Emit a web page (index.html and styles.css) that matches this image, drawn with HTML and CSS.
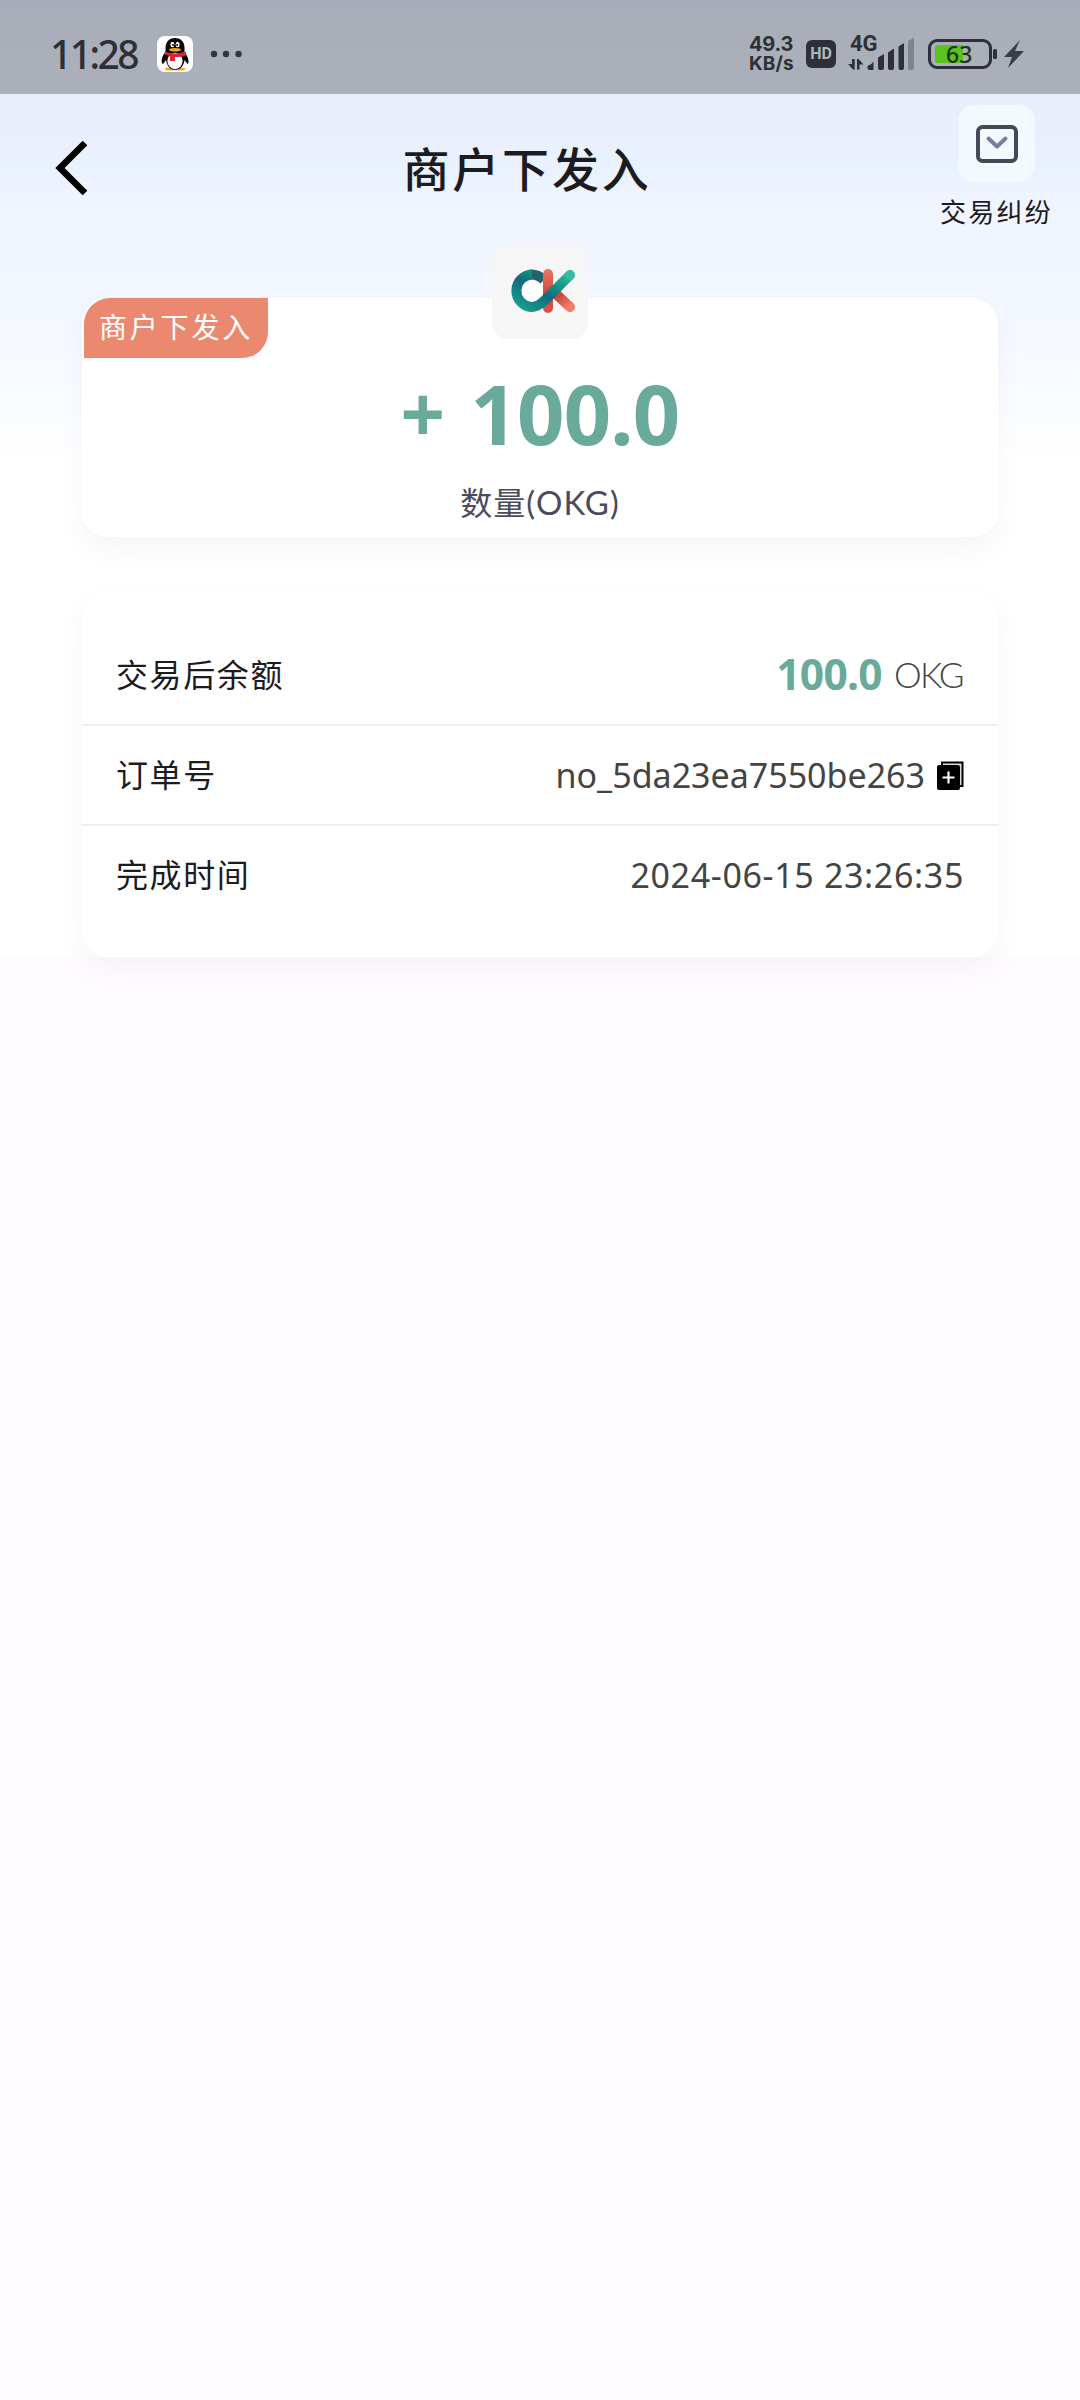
FILE: index.html
```html
<!DOCTYPE html>
<html lang="zh-CN">
<head>
<meta charset="utf-8">
<title>商户下发入</title>
<link rel="stylesheet" href="styles.css">
</head>
<body>
<div class="page">
  <div class="status">
    <span class="clock">11:28</span>
    <svg class="qq" viewBox="0 0 36 36">
      <rect width="36" height="36" rx="8" fill="#fff"/>
      <ellipse cx="12.500" cy="33" rx="4.500" ry="1.500" fill="#f4ab20"/><ellipse cx="23.500" cy="33" rx="4.500" ry="1.500" fill="#f4ab20"/>
      <path d="M8.500 16C4 21 4 27 6 28l3-4c1 6 4 10 9 10s9-4 9.500-10l3 4c2-1 1-7-3-12V12C27.500 5 23 2 18 2S8.500 5 8.500 12Z" fill="#050505"/>
      <ellipse cx="18" cy="25" rx="7.600" ry="8.200" fill="#fff"/>
      <path d="M7.500 15.500q10 4 21 0l.500 4q-5 2-11 1.500v4h-5v-5l-5-1.500Z" fill="#db2430"/>
      <ellipse cx="15.400" cy="8.500" rx="2" ry="2.700" fill="#fff"/><ellipse cx="20.600" cy="8.500" rx="2" ry="2.700" fill="#fff"/>
      <circle cx="16" cy="9" r="1"/><circle cx="20.200" cy="9" r="1"/>
      <ellipse cx="18" cy="13.700" rx="6" ry="1.800" fill="#f4ab20"/>
    </svg>
    <svg class="dots" viewBox="0 0 32 8" fill="#32363d"><circle cx="4" cy="4" r="3.200"/><circle cx="16" cy="4" r="3.200"/><circle cx="28.500" cy="4" r="3.200"/></svg>
    <span class="speed"><span class="rate">49.3</span><span class="unit">KB/s</span></span>
    <span class="hd">HD</span>
    <span class="signal">
      <span class="net">4G</span>
      <svg viewBox="0 0 68 34" fill="#2d3036">
        <path d="M4 22h2.700v10.500H5L0 27h4ZM9 32.500V22h1.500l5 5.500h-4v5Z"/>
        <path d="M19.500 29q4-1 6-4.500v8.500h-4q-2 0-2-2ZM30 20.500l6-3.500v14q0 2-2 2h-2q-2 0-2-2ZM40 15.500l6-4v19.500q0 2-2 2h-2q-2 0-2-2ZM50.500 9.500l5.500-3.500v25q0 2-2 2h-1.500q-2 0-2-2Z"/>
        <path d="M60 4l6-3.500v30.500q0 2-2 2h-2q-2 0-2-2Z" fill="#7f858f"/>
      </svg>
    </span>
    <span class="battery">
      <svg viewBox="0 0 96 32">
        <rect x="1.500" y="2.500" width="61" height="27" rx="7.500" fill="none" stroke="#2d3036" stroke-width="3"/>
        <path d="M10 7h25v18H10q-3 0-3-3V10q0-3 3-3Z" fill="#59c51c"/>
        <rect x="65" y="11" width="4" height="10" rx="1.500" fill="#2d3036"/>
        <path d="M92 2 76 19h8L80 30 96 13H87Z" fill="#3a3e45"/>
      </svg>
      <span class="level">63</span>
    </span>
  </div>

  <header class="header">
    <svg class="back" viewBox="0 0 34 56"><path d="M30 3 5 28l25 25" fill="none" stroke="#000" stroke-width="6.600"/></svg>
    <h1 class="title">商户下发入</h1>
    <div class="dispute">
      <span class="tile">
        <svg viewBox="0 0 42 38" fill="none"><rect x="2" y="2" width="38" height="34" rx="4.500" stroke="#454955" stroke-width="4"/><path d="M12.500 13.500l8.500 8 8.500-8" stroke="#777da1" stroke-width="4" stroke-linecap="round" stroke-linejoin="round"/></svg>
      </span>
      <span class="caption">交易纠纷</span>
    </div>
  </header>

  <main class="content">
    <section class="card summary">
      <span class="tag">商户下发入</span>
      <span class="logo">
        <svg viewBox="0 0 66 46">
          <defs>
            <linearGradient id="ring" x1="0" y1="1" x2="1" y2="0"><stop offset="0" stop-color="#16a28d"/><stop offset=".45" stop-color="#126a7d"/><stop offset=".7" stop-color="#129284"/><stop offset="1" stop-color="#35bda0"/></linearGradient>
            <linearGradient id="stem" gradientUnits="userSpaceOnUse" x1="0" y1="0" x2="0" y2="46"><stop offset="0" stop-color="#f17b64"/><stop offset=".55" stop-color="#c74840"/><stop offset="1" stop-color="#e05447"/></linearGradient>
            <linearGradient id="leg" x1="0" y1="0" x2="1" y2="1"><stop offset="0" stop-color="#bc3f39"/><stop offset="1" stop-color="#f4806c"/></linearGradient>
          </defs>
          <circle cx="22" cy="23" r="11" fill="#fff"/>
          <path d="M46 26l14 13" stroke="url(#leg)" stroke-width="10" stroke-linecap="round"/>
          <path d="M34 12Q28 6 20 6.500" fill="none" stroke="#27606f" stroke-width="10"/>
          <path d="M38 6v34" stroke="url(#stem)" stroke-width="10" stroke-linecap="round"/>
          <path d="M22 6.500A16.300 16.300 0 0 0 21 39c6 0 10-3 14-7L60 7" fill="none" stroke="url(#ring)" stroke-width="10"/>
          <circle cx="60" cy="7" r="5" fill="#35bda0"/>
        </svg>
      </span>
      <strong class="amount"><span class="sign">+</span><span>100.0</span></strong>
      <span class="quantity">数量<span class="code">(OKG)</span></span>
    </section>

    <section class="card details">
      <div class="row"><span class="label">交易后余额</span><span class="value"><b class="balance">100.0</b><span class="currency">OKG</span></span></div>
      <div class="row"><span class="label">订单号</span><span class="value"><span class="order">no_5da23ea7550be263</span>
        <svg class="copy" viewBox="0 0 27 29"><path d="M5 1h21v24H22V5H5Z" fill="#ddd"/><path d="M5 4V1.500h20.500V25H23" fill="none" stroke="#000" stroke-width="2"/><rect y="4" width="23" height="25" rx="2"/><path d="M5.500 16.500h12M11.500 10.500v12" stroke="#fff" stroke-width="2.200"/></svg></span></div>
      <div class="row"><span class="label">完成时间</span><span class="value"><span class="time">2024-06-15 23:26:35</span></span></div>
    </section>
  </main>
</div>
</body>
</html>
```
FILE: styles.css
```css
* { box-sizing: border-box; }
body { margin: 0; min-height: 2400px; background: #fffbff; color: #1c1b1f; font-family: "Noto Sans", "Noto Sans CJK SC", sans-serif; }
svg { display: block; flex: none; }
.page { width: 1080px; height: 957px; background: linear-gradient(#e3e9f8 0, #e8eefb 100px, #eaf2fd 175px, #f0f4fe 200px, #f3f7ff 310px, #fff 460px); }

.status { height: 94px; padding: 14px 55px 0 50px; display: flex; align-items: center; background: rgba(0, 0, 0, .26); color: #2d3036; }
.clock { width: 107px; font-size: 39px; font-weight: 500; line-height: 48px; letter-spacing: -2.600px; }
.qq { width: 36px; height: 36px; }
.dots { width: 32px; height: 8px; margin-left: 17px; }
.speed { width: 57px; margin-left: 507px; display: flex; flex-direction: column; font-family: Inter, sans-serif; font-weight: 700; line-height: 20px; }
.rate { font-size: 20px; letter-spacing: -.2px; }
.unit { font-size: 19px; letter-spacing: .1px; }
.hd { width: 30px; height: 28px; border-radius: 6px; background: #2d3036; color: #b0b5bf; font: 700 16px/28px Roboto, sans-serif; text-align: center; }
.signal { position: relative; width: 68px; margin-left: 12px; }
.signal svg { width: 68px; height: 34px; }
.net { position: absolute; left: 2px; top: -5px; font: 700 22px/24px Roboto, sans-serif; }
.battery { position: relative; margin-left: 12px; }
.battery svg { width: 96px; height: 32px; }
.level { position: absolute; left: 18px; top: 1px; font-size: 23px; font-weight: 500; line-height: 30px; color: #1e3515; }

.header { height: 204px; display: grid; grid-template-columns: 200px 654px 1fr; }
.back { width: 34px; height: 56px; margin: 46px 0 0 55px; }
.title { margin: 42px 0 0; text-align: center; font: 500 47px/62px "Noto Sans CJK SC", sans-serif; letter-spacing: 2.800px; }
.dispute { display: flex; flex-direction: column; align-items: center; padding-top: 11px; margin-left: 59px; }
.tile { width: 77px; height: 77px; border-radius: 16px; background: #f4f8ff; display: grid; place-items: center; }
.tile svg { width: 42px; height: 38px; }
.caption { margin-top: 11px; font: 400 26px/36px "Noto Sans CJK SC", sans-serif; letter-spacing: 2.300px; white-space: nowrap; }

.content { padding: 0 82px; display: flex; flex-direction: column; gap: 53px; }
.card { background: #fff; border-radius: 26px; box-shadow: 0 12px 28px rgba(0, 0, 0, .045); }
.summary { position: relative; height: 239px; padding-top: 68px; display: flex; flex-direction: column; align-items: center; }
.tag { position: absolute; left: 2px; top: 0; width: 184px; height: 60px; border-radius: 26px 0 26px 0; background: #ea8970; color: #fff; text-align: center; font: 400 28px/57px "Noto Sans CJK SC", sans-serif; letter-spacing: 2.800px; }
.logo { position: absolute; left: 410px; top: -55px; width: 96px; height: 96px; border-radius: 16px; background: #f6f6f6; display: grid; place-items: center; }
.logo svg { width: 66px; height: 46px; margin-left: 6px; }
.amount { display: flex; gap: 26px; font-size: 83px; font-weight: 700; line-height: 94px; letter-spacing: -.8px; color: #6aaa9b; }
.sign { font-size: 78px; }
.quantity { margin-top: 18px; font: 400 32px/46px "Noto Sans CJK SC", sans-serif; letter-spacing: 1px; color: #4b4b5c; }
.code { font-family: Lato, sans-serif; font-size: 33px; }

.details { height: 367px; padding-top: 36px; }
.row { height: 100px; padding: 0 34px; display: flex; align-items: center; justify-content: space-between; border-bottom: 2px solid #f0f0f0; }
.row:last-child { border-color: transparent; }
.label { margin-bottom: 4px; font: 400 32px/46px "Noto Sans CJK SC", sans-serif; letter-spacing: 1.600px; }
.value { display: flex; align-items: center; color: #444; font-size: 34px; line-height: 46px; white-space: pre; }
.balance { margin: -3px 12px 0 0; font-size: 42.500px; letter-spacing: -.7px; color: #6aaa9b; }
.currency { font-family: Lato, sans-serif; font-weight: 300; font-size: 35px; letter-spacing: -1.600px; margin: -2px 1px 0 0; }
.copy { width: 27px; height: 29px; margin-left: 12px; }
.time { letter-spacing: .65px; margin-top: -1px; }
```
